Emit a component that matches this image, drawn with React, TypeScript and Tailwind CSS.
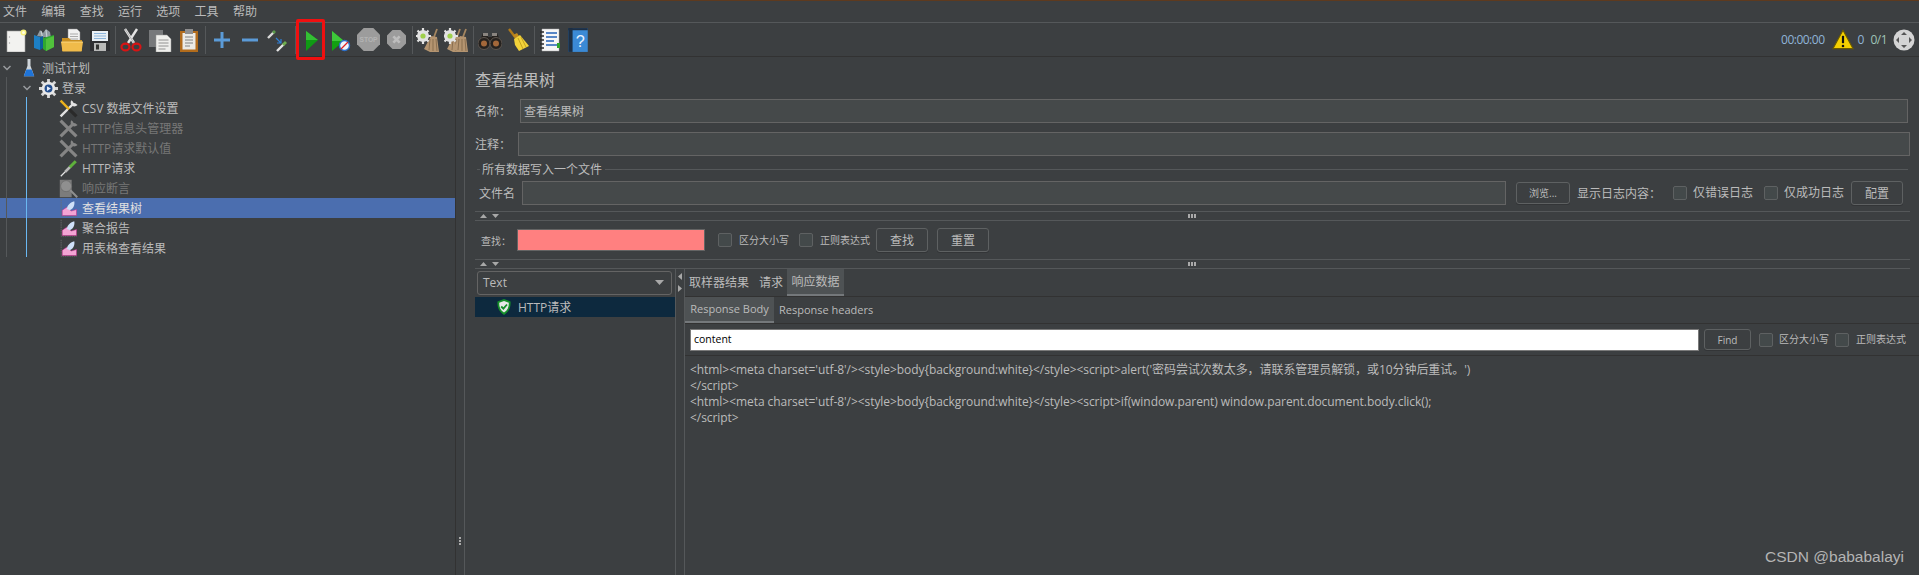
import type { ReactNode } from 'react';

const MENUS = ['文件', '编辑', '查找', '运行', '选项', '工具', '帮助'];

function Svg({ size = 24, children }: { size?: number; children: ReactNode }) {
  return (
    <svg width={size} height={size} viewBox="0 0 24 24" className="block shrink-0">
      {children}
    </svg>
  );
}

const IconNew = () => (
  <Svg>
    <path d="M3 3h15l3 3v18H3z" fill="#f2f2f0" stroke="#9a9a9a" strokeWidth=".6" />
    <circle cx="5.500" cy="9" r=".7" fill="#aaa" />
    <circle cx="5.500" cy="15" r=".7" fill="#aaa" />
    <circle cx="19.500" cy="4.500" r="3" fill="#f6ef7a" />
    <circle cx="19.500" cy="4.500" r="1.500" fill="#fffde0" />
  </Svg>
);
const IconTemplates = () => (
  <Svg>
    <path d="M5 8l3-6 3 3 3-4 4 3 1 6z" fill="#8f9aa0" />
    <path d="M9 3l2 8M14 2l1 8" stroke="#c6ced2" strokeWidth="1.200" />
    <path d="M2 7l6 2v13l-6-2z" fill="#1d7fc4" />
    <path d="M8 9l3-1v12l-3 2z" fill="#0d5f99" />
    <path d="M11 10l11-3v12l-8 4-3-2z" fill="#2fa82f" />
    <path d="M14 11l8-3v11l-8 4z" fill="#51c13c" />
  </Svg>
);
const IconOpen = () => (
  <Svg>
    <path d="M8 1h9l3 3v9H8z" fill="#f1f1f1" stroke="#888" strokeWidth=".5" />
    <path d="M10 6h8M10 8.500h8M10 11h8" stroke="#999" strokeWidth=".8" />
    <path d="M2 10h7l2 2h11v11H2z" fill="#c98f20" />
    <path d="M1 14h22l-1.500 9.500H2.500z" fill="#f0bb4a" />
    <path d="M1 14h22" stroke="#ffe08f" strokeWidth=".8" />
  </Svg>
);
const IconSave = () => (
  <Svg>
    <path d="M2 2h20v21H2z" fill="#2f2f33" />
    <path d="M4 3h16v10H4z" fill="#e9eef5" />
    <path d="M6 5.500h12M6 8h12M6 10.500h12" stroke="#8db4dc" strokeWidth="1" />
    <path d="M6 15h12v8H6z" fill="#b8b8b8" />
    <path d="M8 16.500h3v5H8z" fill="#333" />
  </Svg>
);
const IconCut = () => (
  <Svg>
    <path d="M6 1l9 14M18 1l-9 14" stroke="#e4e4e4" strokeWidth="2.400" />
    <path d="M6 1l9 14" stroke="#9a9a9a" strokeWidth=".7" />
    <ellipse cx="6.500" cy="19" rx="4" ry="3.400" fill="none" stroke="#d81414" strokeWidth="2.200" />
    <ellipse cx="17.500" cy="19" rx="4" ry="3.400" fill="none" stroke="#d81414" strokeWidth="2.200" />
  </Svg>
);
const IconCopy = () => (
  <Svg>
    <path d="M1 2h14v17H1z" fill="#77797b" />
    <path d="M8 7h11l4 4v13H8z" fill="#efefec" stroke="#999" strokeWidth=".5" />
    <path d="M10.500 12h10M10.500 15h10M10.500 18h10M10.500 21h7" stroke="#888" strokeWidth=".9" />
  </Svg>
);
const IconPaste = () => (
  <Svg>
    <path d="M3 3h18v21H3z" fill="#b26c1c" />
    <path d="M5.500 5h13v16.500h-13z" fill="#ecebe6" />
    <path d="M8 1h8v5H8z" fill="#8e8e8e" />
    <path d="M8 9h8M8 12h8M8 15h8M8 18h5" stroke="#777" strokeWidth=".9" />
  </Svg>
);
const IconPlus = () => (
  <Svg>
    <path d="M12 4v16M4 12h16" stroke="#5b9bd8" strokeWidth="3" />
  </Svg>
);
const IconMinus = () => (
  <Svg>
    <path d="M4 12h16" stroke="#5b9bd8" strokeWidth="3" />
  </Svg>
);
const IconToggle = () => (
  <Svg>
    <path d="M2 10l6-6" stroke="#d9d9d9" strokeWidth="2.400" />
    <path d="M7 5l2-2" stroke="#5a9a4a" strokeWidth="2.800" />
    <path d="M11 23l7-7" stroke="#e4e4e4" strokeWidth="2.400" />
    <path d="M17 17l3-3" stroke="#6fae4f" strokeWidth="2.800" />
    <path d="M10 10l5 5M15 11v4h-4" stroke="#2f80d8" strokeWidth="1.200" fill="none" />
  </Svg>
);
const IconPlay = () => (
  <Svg>
    <path d="M6 3l12 9-12 11z" fill="#0f9a14" />
    <path d="M6 3l12 9H6z" fill="#34c034" />
  </Svg>
);
const IconPlayNoPause = () => (
  <Svg>
    <path d="M4 3l12 10-12 10z" fill="#12a012" />
    <path d="M4 3l12 10H4z" fill="#3ec83a" />
    <circle cx="16.500" cy="17.500" r="5" fill="#f1f5fb" stroke="#2c6fc9" strokeWidth="1.400" />
    <path d="M13 21l7-7" stroke="#d22" strokeWidth="1.300" />
  </Svg>
);
const IconStop = () => (
  <Svg size={23}>
    <path d="M7 0h10l7 7v10l-7 7H7l-7-7V7z" fill="#9c9c9c" />
    <text x="12" y="14.500" fontSize="7" fontWeight="700" textAnchor="middle" fill="#b4b4b4" fontFamily="'Liberation Sans',sans-serif">
      STOP
    </text>
  </Svg>
);
const IconShutdown = () => (
  <Svg size={19}>
    <path d="M7 0h10l7 7v10l-7 7H7l-7-7V7z" fill="#9c9c9c" />
    <path d="M8 8l8 8M16 8l-8 8" stroke="#bdbdbd" strokeWidth="3.400" />
  </Svg>
);
const Gear = ({ x, y }: { x: number; y: number }) => (
  <g transform={`translate(${x} ${y})`}>
    <circle cx="0" cy="0" r="6" fill="#e2e2e2" />
    <path d="M0-8v16M-8 0h16M-5.500-5.500l11 11M5.500-5.500l-11 11" stroke="#e2e2e2" strokeWidth="2.200" />
    <circle cx="0" cy="0" r="2.600" fill="#9fd04c" />
  </g>
);
const Brush = ({ dx }: { dx: number }) => (
  <g transform={`translate(${dx} 0)`}>
    <path d="M19 1l-3 8" stroke="#a58660" strokeWidth="1.800" />
    <path d="M13 8l6 1 2 15-9 0-6-3z" fill="#b49470" />
    <path d="M12 11l-1 11M15 11l0 12M18 11l1 12" stroke="#7e6548" strokeWidth=".8" />
  </g>
);
const IconClear = () => (
  <Svg>
    <Brush dx={2} />
    <Gear x={7} y={8} />
  </Svg>
);
const IconClearAll = () => (
  <Svg>
    <Brush dx={-3} />
    <Brush dx={3} />
    <Gear x={6} y={8} />
  </Svg>
);
const IconFind = () => (
  <Svg>
    <path d="M5 5h5v4h4V5h5l5 12H0z" fill="#26221f" />
    <path d="M5 5h5v3H5zM14 5h5v3h-5z" fill="#8a8580" />
    <circle cx="6" cy="15.500" r="6" fill="#26221f" stroke="#5e5650" strokeWidth="1" />
    <circle cx="18" cy="15.500" r="6" fill="#26221f" stroke="#5e5650" strokeWidth="1" />
    <circle cx="6" cy="15.500" r="3" fill="#a4683a" />
    <circle cx="18" cy="15.500" r="3" fill="#a4683a" />
  </Svg>
);
const IconBroom = () => (
  <Svg>
    <path d="M3 1l6 8" stroke="#b07a1a" strokeWidth="2.400" />
    <path d="M7 7l4-2 2 3-4 3z" fill="#c08a1e" />
    <path d="M8 11l6-4 9 11-10 5-4-6z" fill="#f2d23a" />
    <path d="M12 10l5 11M15 9l5 10" stroke="#b59417" strokeWidth=".8" />
  </Svg>
);
const IconFunction = () => (
  <Svg>
    <path d="M4 1h17v22H4z" fill="#f6f6f6" stroke="#aaa" strokeWidth=".5" />
    <path d="M8 5h11M8 9h11M8 13h8M8 17h11" stroke="#2462b6" strokeWidth="1.400" />
    <path d="M2 4h4M2 8h4M2 12h4M2 16h4M2 20h4" stroke="#2b2b2b" strokeWidth="1.300" />
    <path d="M19 15h3v5h-3z" fill="#2fa32f" />
  </Svg>
);
const IconHelp = () => (
  <Svg size={26}>
    <path d="M3 1h18v22H3z" fill="#3b8ad6" />
    <path d="M3 1h4v22H3z" fill="#1d2f44" />
    <path d="M3 1h18v2H3z" fill="#1d2f44" />
    <text x="14" y="18" fontSize="15" textAnchor="middle" fill="#e8f2ff" fontFamily="'Liberation Sans',sans-serif">
      ?
    </text>
  </Svg>
);

const IconFlask = () => (
  <Svg size={18}>
    <path d="M10 0h4v9l5 14H5l5-14z" fill="#cfd5da" />
    <path d="M8.500 14h7l3.500 9H5z" fill="#1f74d8" />
  </Svg>
);
const IconGear = () => (
  <Svg size={19}>
    <path d="M12 0v24M0 12h24M3.500 3.500l17 17M20.500 3.500l-17 17" stroke="#d9d9d9" strokeWidth="3.600" />
    <circle cx="12" cy="12" r="8.500" fill="#e8e8e8" />
    <circle cx="12" cy="12" r="5" fill="#244f8f" />
    <path d="M10 9l5 3-5 3z" fill="#e6eefc" />
  </Svg>
);
const IconTools = ({ gray }: { gray?: boolean }) => {
  const metal = gray ? '#858585' : '#e2e2e2';
  return (
    <Svg size={19}>
      <path d="M2 22L18 6" stroke={metal} strokeWidth={gray ? 4 : 3} />
      <path d="M15.500 1.500a6 6 0 0 0 1 7 6 6 0 0 0 7-1l-3-2-2-.5-1-2z" fill={metal} />
      <path d="M2 2l11 11" stroke={gray ? '#858585' : '#ecb21c'} strokeWidth={gray ? 4 : 3} />
      <path d="M13 13l9 9" stroke={gray ? '#858585' : '#2a2a2a'} strokeWidth="4" />
    </Svg>
  );
};
const IconPipette = () => (
  <Svg size={18}>
    <path d="M1 23l10-10" stroke="#e4e4e4" strokeWidth="1.600" />
    <path d="M7 17l7-7" stroke="#b9b9b9" strokeWidth="3.400" />
    <path d="M13 11l8-8" stroke="#5fb13c" strokeWidth="4" />
  </Svg>
);
const IconAssert = () => (
  <Svg size={19}>
    <path d="M1 1h15v22H1z" fill="#7c7c7c" />
    <circle cx="9" cy="9" r="7" fill="#8f8f8f" stroke="#6a6a6a" />
    <path d="M14 14l9 9" stroke="#8f8f8f" strokeWidth="2.600" />
  </Svg>
);
const IconListener = () => (
  <Svg size={18}>
    <path d="M1.500 1v22h21" stroke="#6f6f6f" strokeWidth="1" strokeDasharray="2 1" fill="none" />
    <path d="M3 22v-7l6-4 6 5 7-2v8z" fill="#f3a4d4" stroke="#c22a8c" strokeWidth=".7" />
    <path d="M9 13c1-5 5-9 10-10 1 5-1 10-6 12z" fill="#cfe0f8" />
  </Svg>
);

function Toolbar() {
  const Slot = ({ w = 28, children }: { w?: number; children: ReactNode }) => (
    <div className={`flex h-full items-center justify-center ${w === 28 ? 'w-[28px]' : 'w-[29px]'}`}>{children}</div>
  );
  const Sep = ({ className }: { className: string }) => (
    <div className={`flex h-full items-center justify-center ${className}`}>
      <div className="h-[28px] w-px bg-[#55585a]" />
    </div>
  );
  return (
    <div className="relative flex h-[34px] items-center border-b border-[#323232] pl-[2px]">
      <Slot><IconNew /></Slot>
      <Slot><IconTemplates /></Slot>
      <Slot><IconOpen /></Slot>
      <Slot><IconSave /></Slot>
      <Sep className="w-[3px]" />
      <Slot><IconCut /></Slot>
      <Slot w={29}><IconCopy /></Slot>
      <Slot w={29}><IconPaste /></Slot>
      <Sep className="w-[5px]" />
      <Slot><IconPlus /></Slot>
      <Slot><IconMinus /></Slot>
      <Slot><IconToggle /></Slot>
      <Sep className="w-[6px]" />
      <Slot><IconPlay /></Slot>
      <Slot><IconPlayNoPause /></Slot>
      <Slot><IconStop /></Slot>
      <Slot><IconShutdown /></Slot>
      <Sep className="w-[4px]" />
      <Slot><IconClear /></Slot>
      <Slot><IconClearAll /></Slot>
      <Sep className="w-[6px]" />
      <Slot><IconFind /></Slot>
      <Slot><IconBroom /></Slot>
      <Sep className="w-[4px]" />
      <Slot><IconFunction /></Slot>
      <Slot><IconHelp /></Slot>
      <div className="ml-auto flex items-center pr-[4px]">
        <span className="text-[12px] tracking-[-0.5px] text-[#8fb4d8]">00:00:00</span>
        <svg width="22" height="21" viewBox="0 0 24 22" className="ml-[7px] block">
          <path d="M12 1l11 20H1z" fill="#f5d000" stroke="#6b5a00" strokeWidth="1.200" />
          <path d="M12 7v8" stroke="#111" strokeWidth="2.400" />
          <circle cx="12" cy="18" r="1.400" fill="#111" />
        </svg>
        <span className="ml-[4px] text-[12px] text-[#8fb4d8]">0</span>
        <span className="ml-[6px] text-[12px] tracking-[-0.5px] text-[#9fc4b8]">0/1</span>
        <svg width="22" height="22" viewBox="0 0 22 22" className="ml-[6px] block">
          <circle cx="11" cy="11" r="10.500" fill="#d4d4d4" />
          <path d="M11 3l3 3H8zM11 19l3-3H8zM3 11l3-3v6zM19 11l-3-3v6z" fill="#555" />
        </svg>
      </div>
      <div className="absolute left-[296px] top-[-4px] h-[41px] w-[29px] rounded-[2px] border-[3px] border-[#f01010]" />
    </div>
  );
}

type TreeRow = { label: string; depth: 0 | 1 | 2; icon: ReactNode; muted?: boolean; selected?: boolean };

const TREE: TreeRow[] = [
  { label: '测试计划', depth: 0, icon: <IconFlask /> },
  { label: '登录', depth: 1, icon: <IconGear /> },
  { label: 'CSV 数据文件设置', depth: 2, icon: <IconTools /> },
  { label: 'HTTP信息头管理器', depth: 2, icon: <IconTools gray />, muted: true },
  { label: 'HTTP请求默认值', depth: 2, icon: <IconTools gray />, muted: true },
  { label: 'HTTP请求', depth: 2, icon: <IconPipette /> },
  { label: '响应断言', depth: 2, icon: <IconAssert />, muted: true },
  { label: '查看结果树', depth: 2, icon: <IconListener />, selected: true },
  { label: '聚合报告', depth: 2, icon: <IconListener /> },
  { label: '用表格查看结果', depth: 2, icon: <IconListener /> },
];

function Tree() {
  return (
    <div className="relative w-[456px] shrink-0 border-r border-[#323232] pt-[1px]">
      {TREE.map((row) => (
        <div key={row.label} className={`flex h-[20px] items-center text-[12px] ${row.selected ? 'bg-[#4b6eaf] text-[#e0e0e0]' : row.muted ? 'text-[#777777]' : 'text-[#bbbbbb]'}`}>
          {row.depth === 0 && (
            <>
              <Chevron className="ml-[3px]" />
              <div className="ml-[9px] flex w-[18px] justify-center">{row.icon}</div>
              <span className="ml-[4px] pt-[2px]">{row.label}</span>
            </>
          )}
          {row.depth === 1 && (
            <>
              <Chevron className="ml-[23px]" />
              <div className="ml-[8px] flex w-[18px] justify-center">{row.icon}</div>
              <span className="ml-[5px] pt-[2px]">{row.label}</span>
            </>
          )}
          {row.depth === 2 && (
            <>
              <div className="ml-[59px] flex w-[19px] justify-center">{row.icon}</div>
              <span className="ml-[4px] pt-[2px]">{row.label}</span>
            </>
          )}
        </div>
      ))}
      <div className="absolute left-[6px] top-[20px] h-[180px] w-px bg-[#55585a]" />
      <div className="absolute left-[26px] top-[40px] h-[160px] w-px bg-[#6ab8f2]" />
    </div>
  );
}

function Chevron({ className }: { className: string }) {
  return (
    <svg width="8" height="6" viewBox="0 0 8 6" className={`block shrink-0 ${className}`}>
      <path d="M.5 1L4 4.500 7.500 1" fill="none" stroke="#9a9da0" strokeWidth="1.500" />
    </svg>
  );
}

function Field({ className = '', children }: { className?: string; children?: ReactNode }) {
  return (
    <div className={`flex h-[24px] items-center border border-[#646464] bg-[#45494a] px-[3px] pt-[2px] text-[12px] text-[#bbbbbb] ${className}`}>
      {children}
    </div>
  );
}

function Btn({ className, children }: { className: string; children: ReactNode }) {
  return (
    <div className={`flex shrink-0 items-center justify-center rounded-[3px] border border-[#5e6162] bg-[#3c3f41] pt-[1px] text-[#bbbbbb] shadow-[0_1px_0_#333537] ${className}`}>
      {children}
    </div>
  );
}

function Check({ className = '' }: { className?: string }) {
  return <div className={`h-[14px] w-[14px] shrink-0 rounded-[2px] border border-[#5e6162] bg-[#43494a] ${className}`} />;
}

function Splitter() {
  return (
    <div className="relative flex h-[10px] items-center border-y border-[#55585a]">
      <svg width="22" height="6" viewBox="0 0 22 6" className="ml-[5px] block">
        <path d="M0 5l3.500-4L7 5zM12 1h7l-3.500 4z" fill="#a8a8a8" />
      </svg>
      <div className="ml-[686px] flex gap-[1px]">
        <i className="block h-[4px] w-[2px] bg-[#aaaaaa]" />
        <i className="block h-[4px] w-[2px] bg-[#aaaaaa]" />
        <i className="block h-[4px] w-[2px] bg-[#aaaaaa]" />
      </div>
    </div>
  );
}

function ResultsPane() {
  return (
    <div className="flex min-w-0 flex-1 flex-col border-l border-[#55585a]">
      <div className="flex flex-col pl-[10px] pr-[9px]">
        <div className="h-[42px] pt-[12px] text-[16px] leading-[22px] text-[#bbbbbb]">查看结果树</div>
        <div className="flex h-[24px] items-center pr-[2px] text-[12px] text-[#bbbbbb]">
          <span className="w-[45px] shrink-0 pt-[2px]">名称：</span>
          <Field className="flex-1">查看结果树</Field>
        </div>
        <div className="mt-[9px] flex h-[24px] items-center text-[12px] text-[#bbbbbb]">
          <span className="w-[43px] shrink-0 pt-[2px]">注释：</span>
          <Field className="flex-1" />
        </div>
        <div className="mt-[4px] flex h-[18px] items-center pl-[2px] pr-[2px] text-[12px] text-[#bbbbbb]">
          <div className="h-px w-[3px] bg-[#55585a]" />
          <span className="mx-[2px] pt-[2px]">所有数据写入一个文件</span>
          <div className="ml-[1px] h-px flex-1 bg-[#55585a]" />
        </div>
        <div className="mt-[3px] flex h-[24px] items-center pl-[4px] text-[12px] text-[#bbbbbb]">
          <span className="w-[43px] shrink-0 pt-[2px]">文件名</span>
          <Field className="w-[984px] shrink-0" />
          <Btn className="ml-[10px] h-[22px] w-[54px] text-[10px]">浏览...</Btn>
          <span className="ml-[7px] w-[96px] shrink-0 pt-[2px]">显示日志内容：</span>
          <Check className="w-[13px]" />
          <span className="ml-[6px] w-[71px] shrink-0">仅错误日志</span>
          <Check />
          <span className="ml-[6px] w-[67px] shrink-0">仅成功日志</span>
          <Btn className="h-[24px] w-[52px] text-[12px]">配置</Btn>
        </div>
        <div className="mt-[6px]">
          <Splitter />
        </div>
        <div className="flex h-[38px] items-center pl-[6px] text-[10px] text-[#bbbbbb]">
          <span className="w-[36px] shrink-0 pt-[2px]">查找：</span>
          <div className="h-[22px] w-[188px] shrink-0 border border-[#646464] bg-[#ff8080]" />
          <Check className="ml-[13px]" />
          <span className="ml-[7px] w-[60px] shrink-0">区分大小写</span>
          <Check />
          <span className="ml-[7px] w-[56px] shrink-0">正则表达式</span>
          <Btn className="h-[24px] w-[52px] text-[12px]">查找</Btn>
          <Btn className="ml-[9px] h-[24px] w-[52px] text-[12px]">重置</Btn>
        </div>
        <Splitter />
      </div>

      <div className="flex flex-1 pl-[10px]">
        <div className="w-[201px] shrink-0 border-r border-[#55585a]">
          <div className="ml-[2px] mt-[2px] flex h-[24px] w-[195px] items-center justify-between rounded-[3px] border border-[#646464] px-[5px] text-[12px] text-[#bbbbbb]">
            <span>Text</span>
            <svg width="10" height="6" viewBox="0 0 10 6" className="mr-[1px] block">
              <path d="M0 0h9L4.500 5z" fill="#a8a8a8" />
            </svg>
          </div>
          <div className="mt-[2px] flex h-[20px] items-center bg-[#0d293e] pl-[22px] text-[12px] text-[#bbbbbb]">
            <svg width="14" height="16" viewBox="0 0 14 16" className="block">
              <path d="M7 0l6.500 2.500C14 8 12 13 7 16 2 13 0 8 .5 2.500z" fill="#16902a" />
              <path d="M7 2l4.800 1.800C12 8 10.500 11.500 7 13.500 3.500 11.500 2 8 2.200 3.800z" fill="#e8e8e8" />
              <path d="M4.200 7.500L6.400 9.700 10 5.500" fill="none" stroke="#16902a" strokeWidth="1.800" />
            </svg>
            <span className="ml-[7px] pt-[1px]">HTTP请求</span>
          </div>
        </div>
        <div className="flex w-[8px] shrink-0 flex-col items-center gap-[5px] pt-[4px]">
          <svg width="4" height="7" viewBox="0 0 4 7" className="block">
            <path d="M4 0v7L0 3.500z" fill="#a8a8a8" />
          </svg>
          <svg width="4" height="7" viewBox="0 0 4 7" className="block">
            <path d="M0 0v7l4-3.500z" fill="#a8a8a8" />
          </svg>
        </div>
        <div className="flex min-w-0 flex-1 flex-col border-l border-[#55585a] text-[12px] text-[#bbbbbb]">
          <div className="flex h-[28px] shrink-0 border-b border-[#323232]">
            <div className="flex w-[70px] items-center pl-[4px]">取样器结果</div>
            <div className="flex w-[32px] items-center pl-[4px]">请求</div>
            <div className="flex w-[57px] items-center justify-center border-b-2 border-[#74787b] bg-[#4e5254]">响应数据</div>
          </div>
          <div className="flex h-[27px] shrink-0 border-b border-[#323232] text-[11px]">
            <div className="flex w-[89px] items-center justify-center border-b-2 border-[#74787b] bg-[#4e5254]">Response Body</div>
            <div className="ml-[5px] flex items-center">Response headers</div>
          </div>
          <div className="flex h-[32px] shrink-0 items-center border-b border-[#323232] pl-[5px] pr-[3px] text-[10px]">
            <div className="flex h-[22px] w-[1009px] shrink-0 items-center border border-[#7a7a7a] bg-white pl-[3px] text-[10.500px] text-black">content</div>
            <Btn className="ml-[5px] h-[21px] w-[47px] text-[10px]">Find</Btn>
            <Check className="ml-[8px]" />
            <span className="ml-[6px] w-[56px] shrink-0">区分大小写</span>
            <Check />
            <span className="ml-[7px]">正则表达式</span>
          </div>
          <div className="pl-[5px] pt-[6px] text-[12px] leading-[16px] tracking-[-0.06px]">
            <p>{"<html><meta charset='utf-8'/><style>body{background:white}</style><script>alert('密码尝试次数太多，请联系管理员解锁，或10分钟后重试。')"}</p>
            <p>{'</script>'}</p>
            <p>{"<html><meta charset='utf-8'/><style>body{background:white}</style><script>if(window.parent) window.parent.document.body.click();"}</p>
            <p>{'</script>'}</p>
          </div>
        </div>
      </div>
    </div>
  );
}

export default function App() {
  return (
    <div className="relative flex h-[575px] w-[1919px] flex-col overflow-hidden bg-[#3c3f41] [font-family:'Open_Sans','Noto_Sans_CJK_SC',sans-serif]">
      <div className="h-px shrink-0 bg-[#5e3a1e]" />
      <div className="flex h-[22px] shrink-0 items-center gap-[14.300px] border-b border-[#55585a] pl-[3px] text-[12px] text-[#bbbbbb]">
        {MENUS.map((m) => (
          <span key={m}>{m}</span>
        ))}
      </div>
      <Toolbar />
      <div className="flex min-h-0 flex-1">
        <Tree />
        <div className="flex w-[8px] shrink-0 flex-col items-center justify-end gap-[1px] pb-[30px]">
          <i className="block h-[2px] w-[2px] bg-[#aaaaaa]" />
          <i className="block h-[2px] w-[2px] bg-[#aaaaaa]" />
          <i className="block h-[2px] w-[2px] bg-[#aaaaaa]" />
        </div>
        <ResultsPane />
      </div>
      <div className="absolute bottom-[8px] right-[15px] text-[15.500px] leading-[20px] text-[#b4b4b4] [font-family:'Liberation_Sans','Noto_Sans_CJK_SC',sans-serif]">CSDN @bababalayi</div>
    </div>
  );
}
